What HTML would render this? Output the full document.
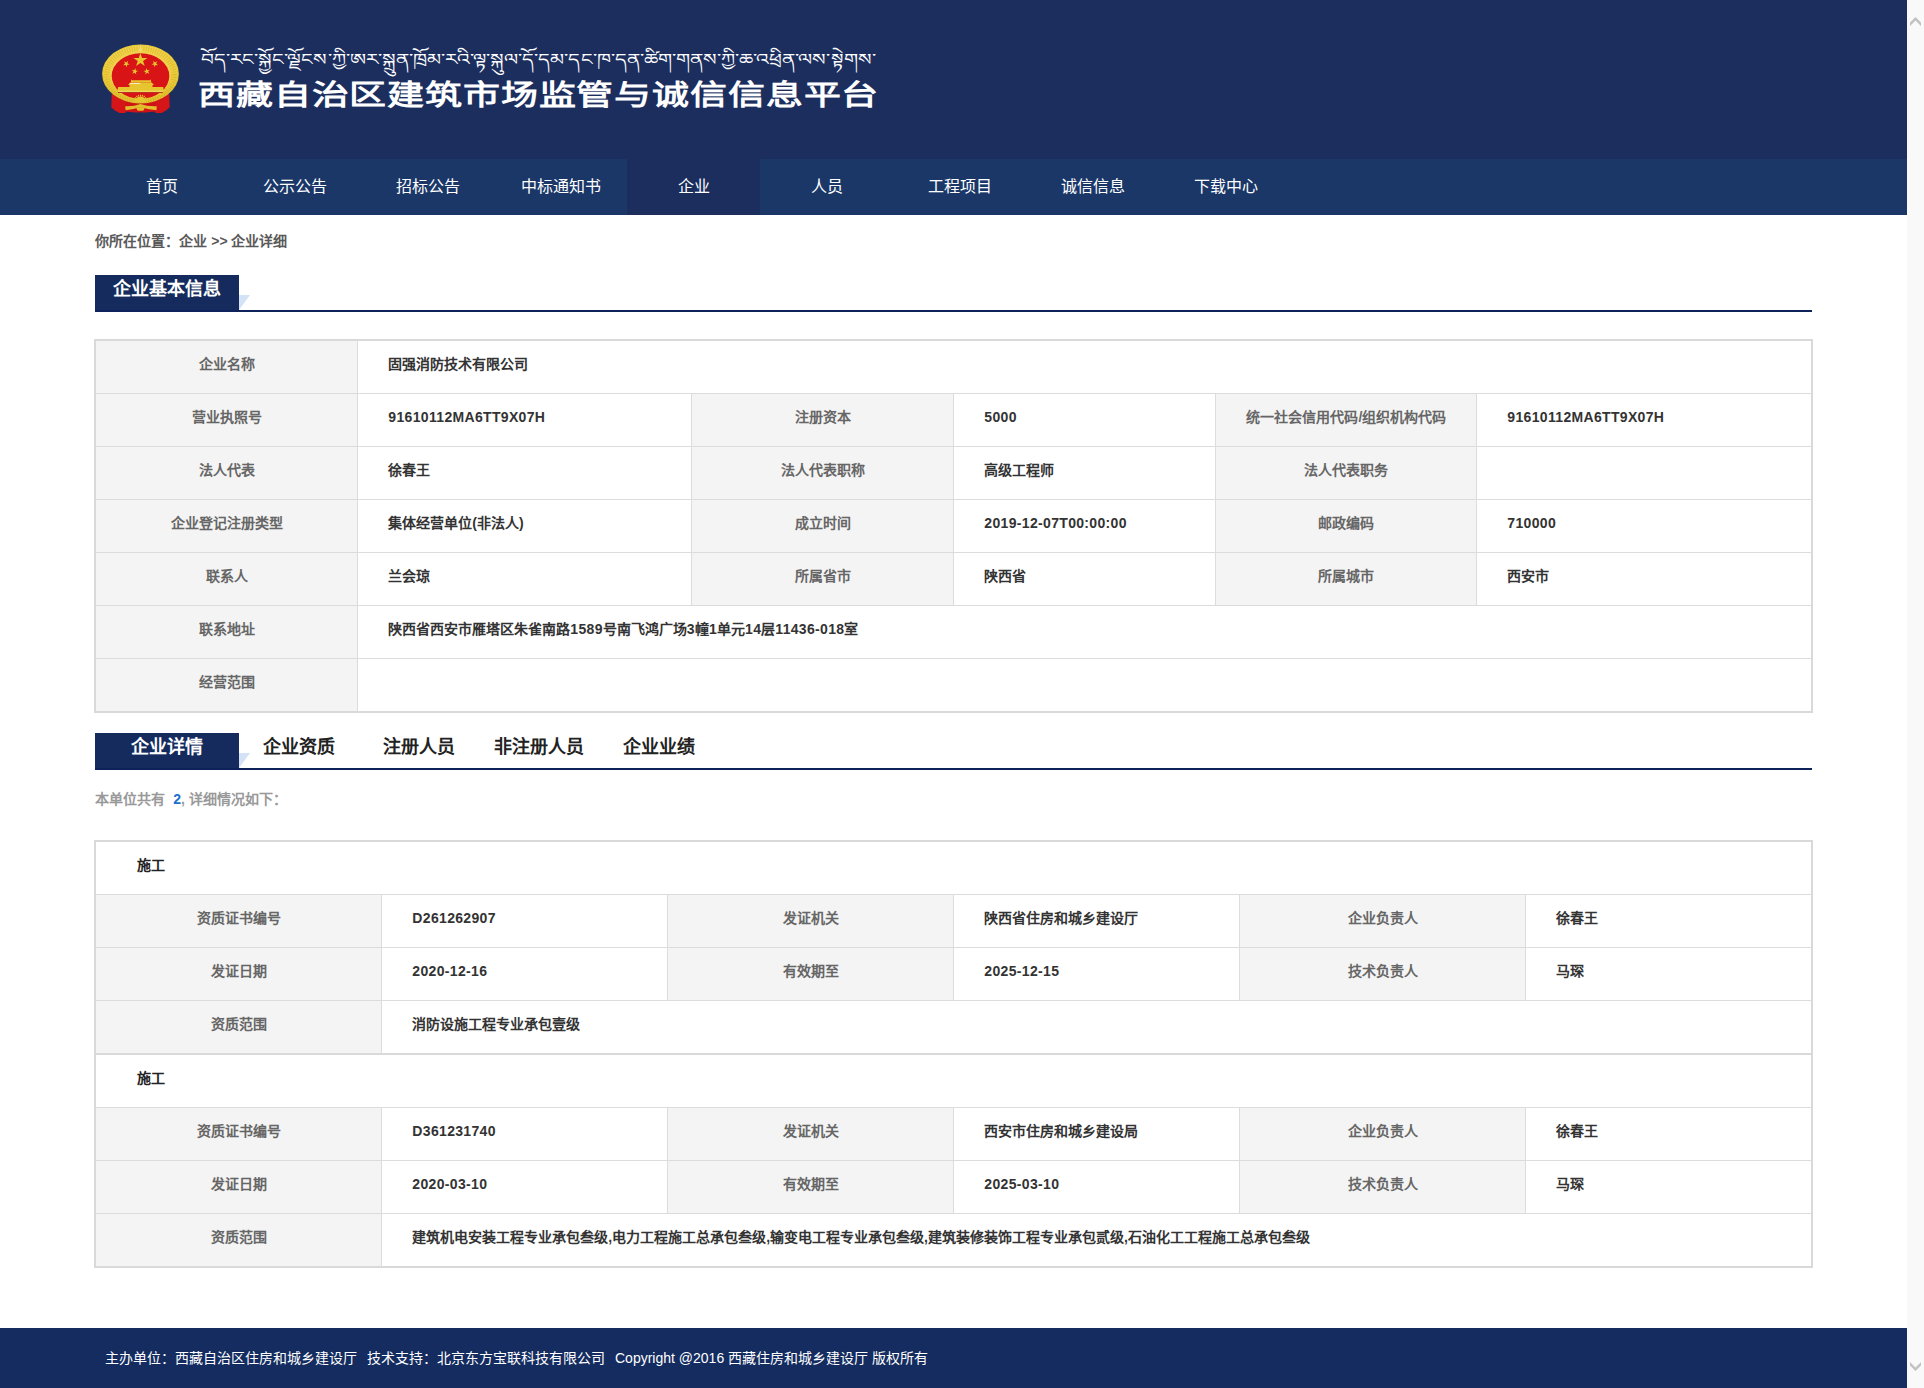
<!DOCTYPE html>
<html lang="zh-CN">
<head>
<meta charset="utf-8">
<title>西藏自治区建筑市场监管与诚信信息平台</title>
<style>
*{box-sizing:border-box}
html,body{margin:0;padding:0}
html{overflow:hidden;background:#fff}
body{width:1924px;height:1388px;position:relative;overflow:hidden;font-family:"Liberation Sans",sans-serif;font-size:14px;color:#333;background:#fff}
a{color:inherit;text-decoration:none}
ul{list-style:none;margin:0;padding:0}

/* fake scrollbar */
#sb{position:absolute;left:1907px;top:0;width:17px;height:1388px;background:#f9f9f9}
#sb svg{position:absolute;left:0;top:0;width:17px;height:1388px}

/* header */
#hd{position:absolute;left:0;top:0;width:1907px;height:159px;background:#1c2e5e;overflow:hidden}
#hd .emb{position:absolute;left:95px;top:36px;width:90px;height:84px}
#hd .tib{position:absolute;left:201px;top:41px;height:36px;line-height:36px;font-size:20px;color:#fff;white-space:nowrap;transform-origin:0 50%;transform:scale(1.004,.82)}
#hd .ttl{position:absolute;left:198px;top:72px;height:48px;line-height:48px;font-size:37px;font-weight:bold;color:#fff;white-space:nowrap;letter-spacing:.85px;transform-origin:0 50%;transform:scale(1,.78)}

/* nav */
#nav{position:absolute;left:0;top:159px;width:1907px;height:56px;background:#1a3768}
#nav ul{margin-left:95.35px}
#nav li{float:left;width:133px;height:56px;line-height:56px;text-align:center;font-size:16px;color:#fff}
#nav li.on{background:#1c2e5e}

/* main */
#main{position:absolute;left:95.35px;top:215px;width:1718px}
.crumb{position:absolute;left:0;top:0;height:52px;line-height:52px;font-weight:bold;color:#595959;white-space:nowrap}
.sec{position:absolute;left:0;width:1717px;height:37px;border-bottom:2px solid #0e235c}
.sec .tab{position:absolute;top:0;height:35px;line-height:29px;font-size:18px;font-weight:bold;text-align:center;color:#222;white-space:nowrap}
.sec .tab.on{left:0;width:144px;background:#152b5e;color:#fff}
.sec .tri{position:absolute;left:144px;top:20px;width:0;height:0;border-top:15px solid #d3e2f4;border-right:11px solid transparent}

table{position:absolute;left:-1px;border-collapse:separate;border-spacing:0;table-layout:fixed;border:2px solid #d9d9d9;width:1719px;font-weight:bold}
td{height:53px;line-height:20px;padding:0 0 6px 0;border-right:1px solid #dcdcdc;border-bottom:1px solid #dcdcdc;vertical-align:middle;overflow:hidden;white-space:nowrap}
td.l{background:#f4f4f4;color:#666;text-align:center}
td.v{padding-left:30px;color:#333}
td.h{padding-left:41px;color:#222}
tr td:last-child{border-right:0}
tr.last td{border-bottom:0;height:52px}
tr.sep td{border-bottom:2px solid #d9d9d9;height:54px}

.n{letter-spacing:.33px}
.cnt{position:absolute;left:0;top:570px;height:28px;line-height:28px;font-weight:bold;color:#999;white-space:nowrap}
.cnt b{color:#1b6fd0}

/* footer */
#ft{position:absolute;left:0;top:1328px;width:1907px;height:60px;background:#142c60;color:#fff;line-height:60px;padding-left:105px;white-space:nowrap}
#ft span{margin-right:10px}
</style>
</head>
<body>

<div id="hd">
  <svg class="emb" viewBox="95 36 90 84">
  <defs><radialGradient id="gr" cx="50%" cy="45%" r="55%"><stop offset="0.72" stop-color="#f0d24a"/><stop offset="0.86" stop-color="#e9c934"/><stop offset="1" stop-color="#d9b222"/></radialGradient></defs>
  <g fill="#d51518">
  <path d="M111.8 93.5 L126 100.5 L125.6 113 L119.5 112.9 L115 110.6 L111.3 107.2 Z"/>
  <path d="M169.2 93.5 L155 100.5 L155.4 113 L161.5 112.9 L166 110.6 L169.7 107.2 Z"/>
  <path d="M125 99 H156 V111.6 Q148 112.8 140.5 112.2 Q133 112.8 125 111.6 Z" fill="#cf1216"/>
  </g>
  <ellipse cx="140.5" cy="73.9" rx="38.4" ry="29.5" fill="url(#gr)"/>
  <ellipse cx="140.5" cy="74.6" rx="33.4" ry="26.4" fill="none" stroke="#c39a18" stroke-width="6" stroke-dasharray="0.9 1.5" opacity=".38"/>
  <ellipse cx="140.5" cy="74.2" rx="36.6" ry="28.2" fill="none" stroke="#f6e27a" stroke-width="1" stroke-dasharray="1.2 1.2" opacity=".55"/>
  <path d="M140.5 44.6 L138.6 51.5 H142.4 Z" fill="#f3dc6c"/>
  <ellipse cx="140.5" cy="76" rx="28.8" ry="22.8" fill="#d81417"/>
  <rect x="118" y="92" width="45" height=".9" fill="#a90d10"/>
  <g fill="#e8c62e">
  <polygon points="140.40,52.90 142.04,57.94 147.34,57.94 143.05,61.06 144.69,66.11 140.40,62.99 136.11,66.11 137.75,61.06 133.46,57.94 138.76,57.94"/>
  <polygon points="128.00,60.86 127.49,63.27 129.63,64.51 127.17,64.77 126.66,67.18 125.65,64.92 123.19,65.18 125.03,63.53 124.02,61.27 126.16,62.51"/>
  <polygon points="153.20,60.86 155.04,62.51 157.18,61.27 156.17,63.53 158.01,65.18 155.55,64.92 154.54,67.18 154.03,64.77 151.57,64.51 153.71,63.27"/>
  <polygon points="135.39,68.05 135.73,70.50 138.17,70.93 135.95,72.01 136.29,74.46 134.57,72.68 132.35,73.76 133.51,71.58 131.80,69.80 134.23,70.23"/>
  <polygon points="146.21,68.05 147.37,70.23 149.80,69.80 148.09,71.58 149.25,73.76 147.03,72.68 145.31,74.46 145.65,72.01 143.43,70.93 145.87,70.50"/>
  </g>
  <g fill="#e6c52f">
  <path d="M131.2 79.3 L132 80.2 H150 L150.8 79.3 L151.2 82.6 H130.8 Z"/>
  <path d="M130.2 82.4 H151.8 L154 85 H128 Z"/>
  <rect x="129.5" y="84.8" width="23" height="2.6"/>
  <path d="M118.2 87.1 H163.2 L164 91 H117.3 Z"/>
  <rect x="118.5" y="90.6" width="44.5" height="1.6" fill="#efd75a"/>
  <rect x="129.8" y="83" width="10.5" height="1" fill="#f8efc0"/>
  </g>
  <g fill="#e6c630">
  <path d="M135.37 102.05L133.58 102.21L133.58 100.99L135.37 101.15Z M135.48 100.43L133.73 100.03L134.11 98.86L135.76 99.57Z M136.09 98.92L134.55 97.99L135.27 97.01L136.63 98.19Z M137.14 97.68L135.96 96.32L136.94 95.60L137.87 97.14Z M138.52 96.81L137.81 95.16L138.98 94.78L139.38 96.53Z M140.10 96.42L139.94 94.63L141.16 94.63L141.00 96.42Z M141.72 96.53L142.12 94.78L143.29 95.16L142.58 96.81Z M143.23 97.14L144.16 95.60L145.14 96.32L143.96 97.68Z M144.47 98.19L145.83 97.01L146.55 97.99L145.01 98.92Z M145.34 99.57L146.99 98.86L147.37 100.03L145.62 100.43Z M145.73 101.15L147.52 100.99L147.52 102.21L145.73 102.05Z"/>
  <path d="M134.95000000000002 102.19999999999999 A5.6 5.6 0 0 1 146.15 102.19999999999999 Z"/>
  </g>
  <g fill="#e2bf2c">
  <path d="M125.2 106.2 Q133.5 106.6 140.5 103.9 Q147.5 106.6 156.8 106.2 L156.4 110.2 Q147.5 109.4 140.5 106.9 Q133.5 109.4 125.6 110.2 Z"/>
  <path d="M136.2 107.6 Q140.5 106.4 144.8 107.6 L143.8 110.2 Q140.5 111.4 137.2 110.2 Z"/>
  </g>
  </svg>
  <div class="tib">བོད་རང་སྐྱོང་ལྗོངས་ཀྱི་ཨར་སྐྲུན་ཁྲོམ་རའི་ལྟ་སྐུལ་དོ་དམ་དང་ཁ་དན་ཚིག་གནས་ཀྱི་ཆ་འཕྲིན་ལས་སྟེགས་</div>
  <div class="ttl">西藏自治区建筑市场监管与诚信信息平台</div>
</div>

<div id="nav">
  <ul>
    <li>首页</li><li>公示公告</li><li>招标公告</li><li>中标通知书</li><li class="on">企业</li><li>人员</li><li>工程项目</li><li>诚信信息</li><li>下载中心</li>
  </ul>
</div>

<div id="main">
  <div class="crumb">你所在位置：企业 &gt;&gt; 企业详细</div>

  <div class="sec" style="top:60px"><div class="tab on">企业基本信息</div><i class="tri"></i></div>

  <table style="top:124px">
    <colgroup><col style="width:262px"><col style="width:334px"><col style="width:262px"><col style="width:262px"><col style="width:261px"><col style="width:334px"></colgroup>
    <tr><td class="l">企业名称</td><td class="v" colspan="5">固强消防技术有限公司</td></tr>
    <tr><td class="l">营业执照号</td><td class="v"><span class="n">91610112MA6TT9X07H</span></td><td class="l">注册资本</td><td class="v"><span class="n">5000</span></td><td class="l">统一社会信用代码/组织机构代码</td><td class="v"><span class="n">91610112MA6TT9X07H</span></td></tr>
    <tr><td class="l">法人代表</td><td class="v">徐春王</td><td class="l">法人代表职称</td><td class="v">高级工程师</td><td class="l">法人代表职务</td><td class="v"></td></tr>
    <tr><td class="l">企业登记注册类型</td><td class="v">集体经营单位(非法人)</td><td class="l">成立时间</td><td class="v"><span class="n">2019-12-07T00:00:00</span></td><td class="l">邮政编码</td><td class="v"><span class="n">710000</span></td></tr>
    <tr><td class="l">联系人</td><td class="v">兰会琼</td><td class="l">所属省市</td><td class="v">陕西省</td><td class="l">所属城市</td><td class="v">西安市</td></tr>
    <tr><td class="l">联系地址</td><td class="v" colspan="5">陕西省西安市雁塔区朱雀南路<span class="n">1589</span>号南飞鸿广场<span class="n">3</span>幢<span class="n">1</span>单元<span class="n">14</span>层<span class="n">11436-018</span>室</td></tr>
    <tr class="last"><td class="l">经营范围</td><td class="v" colspan="5"></td></tr>
  </table>

  <div class="sec" style="top:518px">
    <div class="tab on">企业详情</div><i class="tri"></i>
    <div class="tab" style="left:144px;width:120px">企业资质</div>
    <div class="tab" style="left:264px;width:120px">注册人员</div>
    <div class="tab" style="left:384px;width:120px">非注册人员</div>
    <div class="tab" style="left:504px;width:120px">企业业绩</div>
  </div>

  <div class="cnt">本单位共有&nbsp;&nbsp;<b>2</b>, 详细情况如下：</div>

  <table style="top:625px">
    <colgroup><col style="width:286px"><col style="width:286px"><col style="width:286px"><col style="width:286px"><col style="width:286px"><col style="width:285px"></colgroup>
    <tr><td class="h" colspan="6">施工</td></tr>
    <tr><td class="l">资质证书编号</td><td class="v"><span class="n">D261262907</span></td><td class="l">发证机关</td><td class="v">陕西省住房和城乡建设厅</td><td class="l">企业负责人</td><td class="v">徐春王</td></tr>
    <tr><td class="l">发证日期</td><td class="v"><span class="n">2020-12-16</span></td><td class="l">有效期至</td><td class="v"><span class="n">2025-12-15</span></td><td class="l">技术负责人</td><td class="v">马琛</td></tr>
    <tr class="sep"><td class="l">资质范围</td><td class="v" colspan="5">消防设施工程专业承包壹级</td></tr>
    <tr><td class="h" colspan="6">施工</td></tr>
    <tr><td class="l">资质证书编号</td><td class="v"><span class="n">D361231740</span></td><td class="l">发证机关</td><td class="v">西安市住房和城乡建设局</td><td class="l">企业负责人</td><td class="v">徐春王</td></tr>
    <tr><td class="l">发证日期</td><td class="v"><span class="n">2020-03-10</span></td><td class="l">有效期至</td><td class="v"><span class="n">2025-03-10</span></td><td class="l">技术负责人</td><td class="v">马琛</td></tr>
    <tr class="last"><td class="l">资质范围</td><td class="v" colspan="5">建筑机电安装工程专业承包叁级,电力工程施工总承包叁级,输变电工程专业承包叁级,建筑装修装饰工程专业承包贰级,石油化工工程施工总承包叁级</td></tr>
  </table>
</div>

<div id="ft"><span>主办单位：西藏自治区住房和城乡建设厅</span><span>技术支持：北京东方宝联科技有限公司</span>Copyright @2016 西藏住房和城乡建设厅 版权所有</div>

<div id="sb">
  <svg viewBox="1907 0 17 1388"><path d="M1910 22.5L1915.5 17L1921 22.5V26L1915.5 20.5L1910 26Z M1910 1362V1365.5L1915.5 1371L1921 1365.5V1362L1915.5 1367.5Z" fill="#c2c2c2"/></svg>
</div>

</body>
</html>
